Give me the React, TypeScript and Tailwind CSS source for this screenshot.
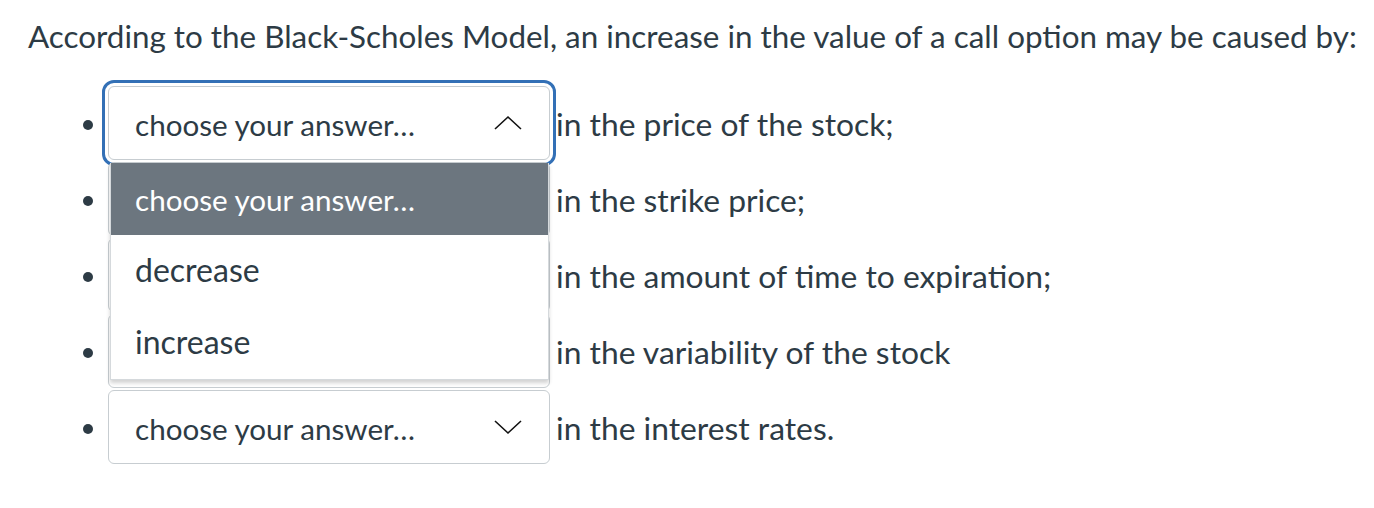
import React from "react";

const rows = [
  "in the price of the stock;",
  "in the strike price;",
  "in the amount of time to expiration;",
  "in the variability of the stock",
  "in the interest rates.",
];

function Chevron({ up }: { up?: boolean }) {
  return (
    <svg width="30" height="16" viewBox="0 0 30 16" className="shrink-0">
      <polyline
        points={up ? "2,14 15,2 28,14" : "2,2 15,14 28,2"}
        fill="none"
        stroke="#111"
        strokeWidth="1.6"
      />
    </svg>
  );
}

export default function App() {
  return (
    <div
      className="bg-white text-[#2d3b45] min-h-[508px] pl-[28px] pt-[16px]"
      style={{ fontFamily: "Lato, 'Noto Sans', sans-serif" }}
    >
      <p className="text-[31.4px] leading-[40px] whitespace-nowrap">
        According to the Black-Scholes Model, an increase in the value of a call option may be caused by:
      </p>
      <ul className="mt-[30px] flex flex-col gap-[2px]">
        {rows.map((t, i) => {
          const hidden = i >= 1 && i <= 3;
          return (
            <li key={i} className="flex items-center h-[74px]">
              <span className="w-[10px] h-[10px] rounded-full bg-[#2d3b45] ml-[55px] mt-[4px] shrink-0" />
              <div className="relative ml-[15px] shrink-0">
                <div
                  className={
                    "w-[442px] h-[74px] bg-white border border-[#c7cdd1] rounded-[6px] flex items-center justify-between pl-[26px] pr-[26px] " +
                    (i === 0 ? "outline-[3px] outline-solid outline-[#3370b6] outline-offset-[3px]" : "")
                  }
                >
                  <span className={"text-[29.6px] leading-none mt-[3px] " + (hidden ? "invisible" : "")}>
                    choose your answer…
                  </span>
                  {i === 0 ? <Chevron up /> : <Chevron />}
                </div>
                {i === 0 && (
                  <div className="absolute z-10 left-[2px] top-[77px] w-[439px] bg-white border-x border-b border-[#d5d9dc] shadow-[0_3px_4px_rgba(0,0,0,0.18)]">
                    <div className="h-[72px] bg-[#6c767f] text-white text-[29.6px] flex items-center pl-[24px]">
                      <span className="mb-[-2px]">choose your answer…</span>
                    </div>
                    <div className="h-[72px] text-[32px] flex items-center pl-[24px]">
                      <span className="mb-[2px]">decrease</span>
                    </div>
                    <div className="h-[72px] text-[32px] flex items-center pl-[24px]">
                      <span className="mb-[2px]">increase</span>
                    </div>
                  </div>
                )}
              </div>
              <span className="ml-[6px] text-[31.8px] leading-none mt-[4px] whitespace-nowrap">{t}</span>
            </li>
          );
        })}
      </ul>
    </div>
  );
}
